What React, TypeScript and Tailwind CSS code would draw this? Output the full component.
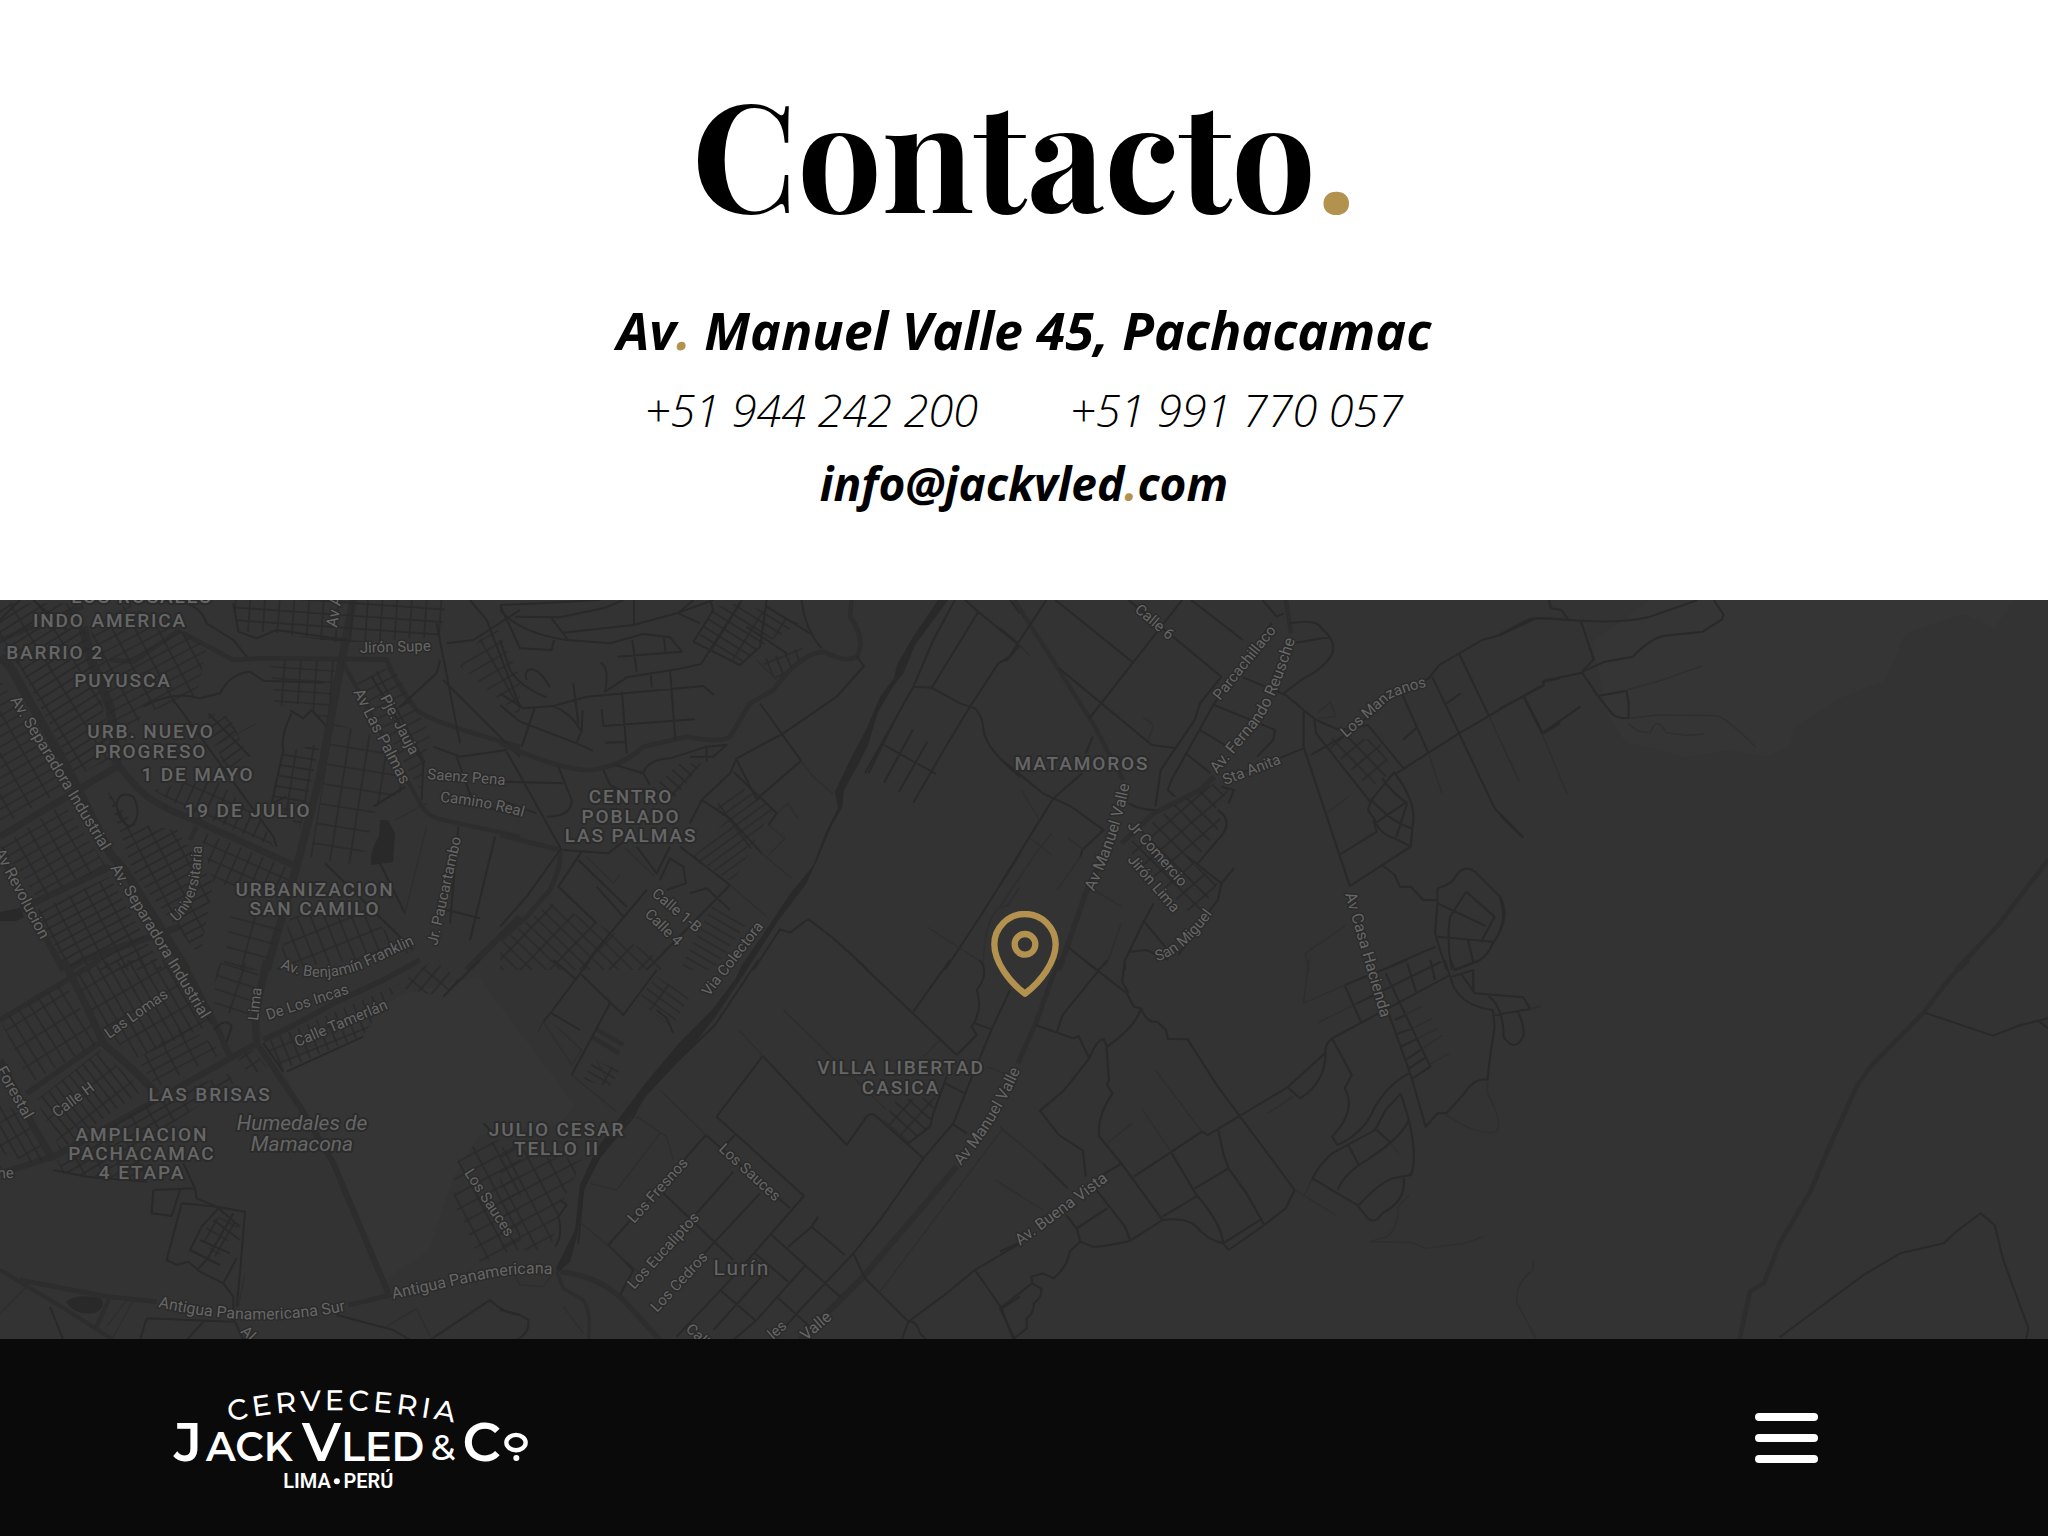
import React, { useId } from "react";

type Tile = {
  transform: string;
  major?: [number, string][];
  minor: string;
  faint?: string;
};

type Grid = { tile: number; points: string; angle: number; w: number; h: number };

const TILES: Tile[] = [
  {
    transform: "translate(0 590) scale(0.33333)",
    major: [
      [26, "M0 200L30 230L200 530L330 790L380 850L560 1140"],
      [24, "M1060 30L1010 290L960 560L890 830L800 1140"],
      [28, "M250 110L270 200L330 350L350 520"],
      [20, "M350 520L400 580Q450 640 560 680L890 830M350 530L200 620L0 740M330 830L100 940L60 960M540 1010L250 1110L200 1140"],
      [14, "M550 130L700 210L780 205L1160 208Q1180 270 1250 360Q1300 400 1560 470M0 150L250 50M540 120L400 215L330 210M590 710L570 750"],
      [12, "M1030 220L1260 640Q1280 680 1330 690L1560 740"],
      [18, "M0 790L190 1140M1560 980L1400 1140"],
    ],
    minor:
      "M520 30Q600 40 620 100L700 150L740 200M430 350Q520 300 600 325L660 310Q690 250 750 245L790 272L970 278M700 40L715 125L770 145L830 120L1040 150M870 360L910 385L935 360L980 410M875 370Q840 440 850 480L815 640L860 620M1115 260L1270 520L1265 630M1320 210L1310 250L1200 350M1310 100L1380 460M1330 270L1560 500M1410 30L1460 90L1560 350M1340 160L1420 150L1560 60M1300 470L1380 500L1520 480M1375 710L1350 1000M1485 740L1410 1050M1215 590L1120 650M975 820L1240 1080M520 330L820 740L830 770M625 370L750 500M60 30L0 90M100 30L200 120M350 640Q360 600 400 620Q430 680 390 710Q350 690 350 640M1140 820L1215 970M1340 960L1440 985M1370 500L1420 640L1560 680",
    faint: "M1280 710L1215 970M640 470L770 400M1185 690L1280 640",
  },
  {
    transform: "translate(500 590) scale(0.33333)",
    major: [
      [14, "M0 460Q230 560 300 535Q380 520 430 470L560 440Q660 460 690 440L750 340L820 300Q900 190 970 185Q1040 220 1070 200Q1100 150 1050 80L1055 30"],
      [14, "M0 735L180 780Q185 830 150 900L80 980L0 1050"],
    ],
    minor:
      "M0 45L120 40L300 30M0 45L60 175L155 180L162 150M0 60Q60 130 200 150L330 160L430 132L510 142L546 185L352 200M155 85L205 150M190 128L400 105L530 70L640 30M402 30L402 105M397 150L410 245M492 145L497 188M45 80L180 82L310 55L370 30M0 150L30 240Q60 290 140 322M80 270Q70 240 95 238Q120 240 150 292M302 218Q330 235 315 305L380 262L540 236L603 222L725 30M0 310L70 355L160 348L260 320L610 288L642 315M452 246L455 292M510 240L526 450M366 305L380 490M305 357L310 408L585 388M315 458L375 456M220 280L235 400M248 360L245 425L228 460M105 352L65 470M0 345L60 395L230 460L278 482M160 348Q215 370 245 425M535 70L580 30M535 70L600 100M580 155L640 60L630 30M580 155L720 225L780 170L800 30M905 30Q915 120 965 175M740 110L860 190M800 50L930 130M1070 200L1092 228L1010 320L850 430L710 505L690 550L605 630L570 700M780 340L903 512L770 628L710 510M700 545L830 670L805 705M605 630L690 685L785 790M20 485L185 780M0 575L190 580M175 530L215 630Q215 680 140 680M0 630L110 670M310 540L330 585L390 615M345 525L430 550L450 585M430 550Q440 510 510 505L620 470L680 464L640 500L570 500M620 470L620 515M540 770L690 885L440 1140M410 770L470 850L510 770M190 780L325 790L370 755M180 780L80 920L0 1010M245 785L175 890L290 1000M235 810L380 950M440 900L280 1090L250 1140M290 890L370 980M480 870L510 805L550 830L558 880L500 900M570 910L620 895L690 960M1365 30L1300 150L1240 290L1095 550M1395 30L1435 65L1295 293L1240 290M1435 65L1550 160M1560 165L1530 200L1495 220L1410 350L1340 465L1240 638M1295 293L1380 340L1425 355Q1450 380 1450 420Q1460 480 1560 560M1190 380L1105 550M1238 420L1152 578M1282 455L1197 605M1152 465L1308 552M1530 30L1560 70M1560 790L1440 980L1335 1140M760 1140L840 1018L870 1028L925 987L1000 1045L1105 1140",
    faint:
      "M903 512L940 560L1000 612M785 790L875 865M830 670L865 640L893 685M805 705L855 745L805 795M690 885L800 980M375 775L465 860M1560 890L1525 945L1495 955Q1450 1000 1450 1140M1285 1013L1450 1120M260 800L340 880L360 855M770 210L830 270",
  },
  {
    transform: "translate(1000 590) scale(0.35714 0.33333)",
    major: [
      [12, "M40 30L260 400L345 570M800 30L815 130"],
      [15, "M600 560L560 600L430 670L340 760M330 700L240 910L165 1140"],
    ],
    minor:
      "M130 30L50 160L20 210L0 215M0 115L50 160M155 30L370 215M510 30L250 385M165 235L425 465L495 475M360 30L620 260M535 30L680 150M735 30L775 80L795 70M620 260L560 340L545 390L450 540L435 650M760 100L600 340L480 570L470 600L490 620M810 100Q890 85 900 115Q950 160 925 200Q900 240 850 265L795 310M830 158L925 140M680 262L800 315L850 360L885 390M850 360L850 470L980 890M600 345L770 420L765 450L720 500M560 420L630 465M520 490L590 550M850 475L700 540L630 560M870 495L960 440L1110 310L1200 265L1230 225L1350 150L1400 135L1500 85L1568 87M1110 550L1285 430L1470 315L1520 285L1520 275L1568 265M885 390L950 420L1030 405L1130 535M880 390L885 430L1040 640M1285 190L1370 380M1210 260L1385 655L1465 742M1125 310L1200 490M1465 315L1520 430L1568 400M1250 340L1290 310M1165 415L1128 450M1105 550Q1170 640 1155 710L1150 770L1105 745Q1060 730 1050 690L1030 660L1040 630L1105 545M1050 700L1140 635M1040 630Q1100 700 1155 715M1110 740L1140 640M1070 565Q1100 610 1140 640M950 795L1055 725L1045 690M980 888L1150 770M1070 825L1105 855L1120 890L1150 890L1185 930L1225 930M1225 895Q1270 880 1275 860Q1300 820 1330 845L1400 920Q1425 1000 1380 1060Q1360 1110 1320 1120L1270 1140M1225 895L1225 940L1360 1008M1305 905L1385 980L1350 1050M1305 905L1260 980Q1250 1060 1265 1140M1225 1040L1380 1055M1225 940L1218 1030L1250 1140M1310 1050L1325 1115M0 505L120 610L200 650L290 720L230 780L225 800M230 550L150 625L80 745L0 885M240 490L260 440M360 640Q390 660 435 660M190 1070L270 1140M430 940L400 1000L350 1110L350 1140M400 990L470 1080M620 880L655 835M620 880L610 930L560 1000L500 1095M525 800L620 880M365 1085L410 1080L470 1110M1090 1130L1220 1070M610 660Q650 690 625 730L550 825M620 590L655 600L640 640",
    faint:
      "M50 160L85 200M85 745L145 795M225 800L160 900M60 600L110 690M145 730L100 790L0 950M265 900L340 950M340 1000L300 1120L270 1140M1370 380L1455 575M1200 490L1238 610M915 670L975 620M970 1005L855 1090L865 1140M890 370L925 335L940 380L890 385M400 380L430 405L415 450M190 745L235 780",
  },
  {
    transform: "translate(1500 590) scale(0.34951 0.33333)",
    major: [[13, "M1568 810L1430 1000L1305 1140"]],
    minor:
      "M0 133L60 100Q90 80 120 85L230 92Q350 100 430 80L565 30M140 30L145 55L175 60L195 88M232 95L268 208L235 245L300 215L380 200Q430 145 470 137L580 125L635 88L640 75L612 30M0 355L125 287L125 272L235 248L280 318L320 370Q330 385 368 385L368 340L362 302L280 318M65 315L120 430L230 350M0 675L65 742M0 920Q25 970 0 1020",
    faint:
      "M362 300L460 272L580 227M368 385L450 375L620 377Q650 385 730 470M368 400Q390 430 430 428Q440 400 450 400Q465 405 475 428L535 436L585 432M0 450L52 570M120 430L192 612",
  },
  {
    transform: "translate(0 960) scale(0.33333)",
    major: [
      [16, "M0 180L300 0M80 400L310 240M790 240Q900 190 1000 130L1150 60L1260 0"],
      [22, "M190 0L260 140L310 250L400 330L470 400M0 300L100 500L160 600M800 0L765 170L770 250"],
      [18, "M540 -10L650 200L690 290M770 250L380 470L160 590L0 640M770 250L900 440L1000 610L1165 1000"],
      [14, "M60 960L320 1010L470 1025M1045 1035L1175 1005"],
      [12, "M0 930L200 1050L340 1140M330 1010L290 1100"],
    ],
    minor:
      "M160 630L260 650L440 665M460 690L455 760L515 768L540 690M460 690L585 685L550 610M585 685L590 715L650 740M545 730L500 900L530 915L565 905L600 935L670 970L700 1010L700 1070M545 730L650 740L735 755L720 940L710 1040M650 740L720 800M655 745L605 800L570 870L660 915M700 760L620 900L590 930M640 780L720 840M600 840L690 880M710 895L670 970M440 1075L700 1085M440 1075L420 1140M700 1075L730 1140M610 1085L560 1140M1010 1065L1180 1110L1230 1140M1290 1140L1470 1020Q1510 1060 1560 1065M150 1040L190 1140M860 335L1090 230M790 250L850 335M640 210Q680 170 695 200L680 245M1450 490L1470 510M1330 110L1440 0",
    faint: "M400 1020L340 1130M380 1020L320 1100M1160 1100L1250 1045L1290 1130M0 1060L80 980M735 940L715 1040",
  },
  {
    transform: "translate(500 960) scale(0.33333)",
    major: [
      [10, "M170 935L190 985L250 1020Q275 1060 265 1140"],
      [16, "M180 935Q300 950 370 1020L480 1140"],
      [18, "M1370 620L1090 950L1000 1040L900 1140"],
      [13, "M290 208L370 255M278 232L358 280"],
    ],
    minor:
      "M618 525L870 745M788 288L650 470L912 708L700 950L530 1130M788 288L1040 555L1100 470Q1115 455 1130 470L1270 595M1070 0L1370 285M1350 0L1240 155M1440 0Q1470 40 1430 90Q1450 150 1415 200L1430 225L1370 285M1340 350L1300 460L1290 500L1225 550M1530 90L1475 208L1420 340L1360 490L1270 595L1140 780L1060 880L900 1050L820 1140M1425 190L1475 208M1335 370L1395 400M1355 490L1400 520M618 525L325 855L400 930M700 635L590 760M490 700L700 900M780 700L640 850L560 940M705 525L680 550M815 825L1020 1010M935 800L865 860M955 770L935 800L1035 885M765 880L865 965M915 918L770 1080L700 1140M660 990L765 1080M835 1015L930 1100M785 950L640 1110M1060 880L1095 955L1225 1085Q1250 1080 1260 1120L1280 1140M1225 1085L1340 1000L1425 930L1560 850M1225 1085L1205 1140M1425 930L1505 1045L1540 1140M1560 1010L1505 1045M270 0L155 155L130 185M240 40L370 165L470 30M330 130L215 345M155 160L240 210M160 0L230 60M775 0L645 195L440 390L400 470L300 590L250 680L235 850M470 150L500 175L520 220M0 1050Q60 1060 85 1080Q90 1120 50 1140M180 720L200 735L175 770Q190 830 165 860M400 930L360 1005",
    faint:
      "M480 390L618 525M715 208L788 288M850 150L1160 450M130 185L215 315L245 270L170 200M215 345L350 455M410 470L500 530L520 600M480 520L350 690L270 670M245 790L420 940M190 1040L250 1120M1560 550L1505 510L1140 995M1485 660L1560 705M1460 320L1510 340M1320 240L1270 290M130 185L115 215M290 300L330 380M40 940L60 975L130 980L160 940",
  },
  {
    transform: "translate(1000 960) scale(0.35714 0.33333)",
    major: [[13, "M165 0L100 190L50 310"]],
    minor:
      "M235 0L355 100L375 140L395 145Q410 190 440 185L465 210L470 237L525 238L610 380L825 690L800 745L740 795L640 870L625 850Q620 790 550 705L480 578M300 0L175 165L160 215M350 0L342 65L360 100M100 195L205 235L220 228L250 295L180 390L112 452L165 525L232 572L240 650M250 295Q270 240 290 237L300 260Q380 200 395 145M298 260L305 360L300 375L315 400Q270 470 278 530L340 610L455 780Q520 770 550 800Q580 840 625 850L735 775M340 610L280 650M50 850L0 875M375 650L565 515L582 525L805 382L910 280Q910 250 930 235L1260 45M610 505L625 580L640 625L690 700L740 795M545 685L640 625M455 770L552 708M270 690L350 800L365 842L455 780M365 842Q290 860 260 860L225 845L215 805L300 745M185 765L215 805M120 610L190 685M225 845L195 875Q190 920 150 955L120 940L88 950L90 970L115 985Q120 1010 95 1030Q95 1060 75 1075L75 1105L40 1135L0 1045L90 970M805 382L840 415Q910 370 912 280M930 235L985 345L965 385Q1000 450 930 530L945 555Q1020 520 1050 440Q1090 370 1145 340M965 75L1010 185M1080 40L1205 320L1155 355M1085 150L1150 345L1192 500L1225 460L1250 460L1300 400Q1330 350 1365 360Q1370 300 1385 200L1380 150Q1300 140 1270 80L1245 0M965 75L1140 0M1140 10L1165 95M1205 0L1218 60M1000 130L1235 5M1105 180L1135 165M1112 222L1155 205M1122 260L1170 235M1135 300L1185 265M1145 325L1195 290M1290 40L1330 100L1465 112L1485 147L1385 165M1265 50L1325 30L1325 90M1260 0L1275 30L1345 0M1365 105Q1410 140 1410 230Q1440 280 1465 230Q1470 200 1450 155M1122 400L1145 480Q1170 600 1150 645L1100 655Q1060 670 1005 735M1122 400L1080 450L1050 510L930 580Q890 620 875 655L1000 735L1030 775Q1050 795 1070 760Q1140 720 1130 655M975 555L1005 615M1145 480Q1120 540 1005 615Q960 650 945 690M1055 510L1095 550",
    faint:
      "M0 500L120 610M0 670L120 750M435 330L565 515M400 450L480 578M300 550L370 490M750 460L820 410M890 188L1000 130M865 0L850 130L965 75M1095 550L1115 580M825 690L940 765M850 710L875 655M1035 845L1155 848L1190 865L1300 850L1355 830M1250 465Q1340 530 1390 515Q1410 490 1365 400L1365 360M1145 705L1115 740Q1115 800 1085 830L1035 845M1135 165L1180 140M1155 205L1210 175M1170 235L1225 205M1185 265L1240 225M1200 315L1258 280M1493 900L1493 930Q1440 970 1448 1030L1500 1135M1485 147L1515 138",
  },
  {
    transform: "translate(1500 960) scale(0.34951 0.33333)",
    major: [[13, "M1340 0L1290 50L1210 160L1060 320L1020 380L930 590L890 690L800 850L755 970L715 995L685 1140"]],
    minor:
      "M1215 158L1410 227L1490 195L1568 175M1540 182L1568 205M800 1132L1040 945L1145 880L1270 850L1305 815L1375 760L1415 795L1440 900L1512 1105L1505 1140",
  },
];

const GRIDS: Grid[] = [
  { tile: 0, points: "0,40 230,40 280,210 340,500 230,560 60,230 0,170", angle: -32, w: 72, h: 26 },
  { tile: 0, points: "0,260 190,600 0,710", angle: -30, w: 62, h: 27 },
  { tile: 0, points: "270,110 380,40 560,130 620,170 590,320 430,370 350,500", angle: -28, w: 60, h: 28 },
  { tile: 0, points: "0,770 190,640 320,830 110,925 60,850", angle: -30, w: 48, h: 28 },
  { tile: 0, points: "320,600 400,700 530,720 640,880 600,1100 400,850", angle: -28, w: 56, h: 26 },
  { tile: 0, points: "110,960 330,860 490,1140 200,1140", angle: -28, w: 50, h: 26 },
  { tile: 0, points: "600,720 880,840 850,910 640,880", angle: 24, w: 36, h: 40 },
  { tile: 0, points: "690,960 850,1000 800,1140 670,1140", angle: 15, w: 90, h: 45 },
  { tile: 0, points: "870,980 1090,960 1230,1090 830,1140", angle: -22, w: 38, h: 62 },
  { tile: 0, points: "460,600 640,560 790,700 820,770 540,650", angle: 24, w: 32, h: 60 },
  { tile: 0, points: "700,30 1340,30 1320,140 1030,160 800,125 715,125", angle: 4, w: 44, h: 38 },
  { tile: 0, points: "810,210 1010,210 980,410 910,340 825,350", angle: 4, w: 48, h: 34 },
  { tile: 0, points: "1000,400 1130,440 1230,590 1130,650 1080,830 930,800", angle: 9, w: 58, h: 60 },
  { tile: 0, points: "850,490 960,460 900,720 820,620", angle: 9, w: 50, h: 32 },
  { tile: 0, points: "1060,260 1180,230 1290,430 1260,600", angle: -28, w: 80, h: 30 },
  { tile: 0, points: "1380,230 1480,90 1560,260 1560,380", angle: -30, w: 90, h: 34 },
  { tile: 0, points: "620,370 690,380 740,490 680,560", angle: -36, w: 80, h: 26 },
  { tile: 1, points: "640,50 720,40 900,100 780,170 720,220 590,155", angle: 32, w: 70, h: 26 },
  { tile: 1, points: "780,210 910,170 900,215 830,270", angle: -22, w: 30, h: 50 },
  { tile: 1, points: "715,585 820,650 700,880 580,800 680,690 640,650", angle: -36, w: 150, h: 24 },
  { tile: 1, points: "450,600 540,520 610,520 510,640", angle: 42, w: 66, h: 26 },
  { tile: 1, points: "0,1060 150,940 290,1000 500,1120 480,1140 0,1140", angle: 44, w: 64, h: 30 },
  { tile: 1, points: "640,940 740,1000 640,1140 540,1140", angle: 30, w: 200, h: 24 },
  { tile: 2, points: "480,650 600,580 640,600 600,660 625,700 540,820 610,880 550,990 350,770", angle: 47, w: 46, h: 40 },
  { tile: 2, points: "900,450 960,440 1060,450 1100,545 1035,595", angle: 48, w: 44, h: 36 },
  { tile: 4, points: "0,180 190,70 310,240 90,370", angle: -32, w: 34, h: 62 },
  { tile: 4, points: "220,50 330,0 520,0 640,190 400,300 290,180", angle: -30, w: 30, h: 66 },
  { tile: 4, points: "410,300 560,190 670,280 470,380", angle: -28, w: 62, h: 28 },
  { tile: 4, points: "110,420 300,270 430,390 180,570", angle: -38, w: 26, h: 66 },
  { tile: 4, points: "170,600 440,430 690,340 700,370 440,540 440,660 190,640", angle: -30, w: 52, h: 26 },
  { tile: 4, points: "0,420 70,470 150,600 100,610 0,580", angle: -30, w: 28, h: 60 },
  { tile: 4, points: "790,250 1200,70 1090,225 850,330", angle: -22, w: 30, h: 46 },
  { tile: 4, points: "650,10 780,10 745,180 640,140", angle: 18, w: 70, h: 40 },
  { tile: 4, points: "710,290 760,270 800,320 750,350", angle: -34, w: 30, h: 34 },
  { tile: 4, points: "1180,80 1300,0 1380,60 1330,110", angle: 40, w: 34, h: 50 },
  { tile: 4, points: "1395,565 1500,540 1562,560 1562,860 1440,910 1380,760 1360,740 1365,620", angle: -28, w: 58, h: 42 },
  { tile: 4, points: "600,820 655,770 720,790 650,900", angle: 30, w: 50, h: 48 },
  { tile: 5, points: "0,560 250,600 190,720 150,870 50,870 0,860", angle: -28, w: 52, h: 40 },
  { tile: 5, points: "470,50 570,110 515,200 410,120", angle: 36, w: 90, h: 24 },
  { tile: 5, points: "1190,420 1310,410 1285,500 1225,550 1150,480", angle: 42, w: 46, h: 32 },
  { tile: 5, points: "280,300 360,330 330,380 250,360", angle: 30, w: 90, h: 22 },
];

const DISTRICTS: [number, number, string][] = [
  [142, 603, "LOS ROSALES"],
  [110, 627, "INDO AMERICA"],
  [55, 659, "BARRIO 2"],
  [123, 687, "PUYUSCA"],
  [151, 738, "URB. NUEVO"],
  [151, 758, "PROGRESO"],
  [198, 781, "1 DE MAYO"],
  [248, 817, "19 DE JULIO"],
  [315, 896, "URBANIZACION"],
  [315, 915, "SAN CAMILO"],
  [631, 803, "CENTRO"],
  [631, 823, "POBLADO"],
  [631, 842, "LAS PALMAS"],
  [1082, 770, "MATAMOROS"],
  [210, 1101, "LAS BRISAS"],
  [142, 1141, "AMPLIACION"],
  [142, 1160, "PACHACAMAC"],
  [142, 1179, "4 ETAPA"],
  [557, 1136, "JULIO CESAR"],
  [557, 1155, "TELLO II"],
  [901, 1074, "VILLA LIBERTAD"],
  [901, 1094, "CASICA"],
];

const AVENUES: [string, string][] = [
  ["Av. Separadora Industrial", "M10 700L108 861"],
  ["Av. Separadora Industrial", "M110 868L208 1030"],
  ["Av Revolucion", "M-6 852L46 950"],
  ["Av A", "M337 628L344 580"],
  ["Av Las Palmas", "M353 692L405 792"],
  ["Antigua Panamericana Sur", "M158 1307Q262 1332 362 1307"],
  ["Antigua Panamericana", "M393 1299L470 1282Q525 1269 565 1276"],
  ["Av. Fernando Reusche", "M1217 774L1257 726Q1278 700 1301 620"],
  ["Av Manuel Valle", "M1094 892Q1128 815 1132 765"],
  ["Av Manuel Valle", "M961 1166Q1001 1120 1028 1052"],
  ["Forestal", "M-4 1070L36 1140"],
  ["Av. Buena Vista", "M1020 1246L1113 1177"],
  ["Av Casa Hacienda", "M1345 894L1382 1022"],
  ["Valle", "M806 1341L846 1307"],
];

const STREETS: [string, string][] = [
  ["Universitaria", "M176 922Q204 902 202 830"],
  ["ova", "M442 577L468 625"],
  ["Jirón Supe", "M360 653L450 650"],
  ["Pje. Jauja", "M380 698L418 770"],
  ["Saenz Pena", "M427 779L530 787"],
  ["Camino Real", "M440 802Q490 806 540 822"],
  ["Jr. Paucartambo", "M437 946L464 825"],
  ["Av. Benjamín Franklin", "M280 968Q322 987 368 966L430 937"],
  ["De Los Incas", "M268 1020L366 988"],
  ["Calle Tamerlán", "M297 1047L404 1002"],
  ["Lima", "M258 1021L263 975"],
  ["Las Lomas", "M109 1039L184 986"],
  ["Calle H", "M57 1118L110 1079"],
  ["che", "M-10 1179L30 1177"],
  ["Al", "M240 1332L266 1358"],
  ["Los Sauces", "M464 1173L516 1252"],
  ["Los Sauces", "M718 1150L785 1211"],
  ["Los Fresnos", "M634 1224L700 1151"],
  ["Los Eucaliptos", "M634 1290L711 1206"],
  ["Los Cedros", "M657 1313L722 1243"],
  ["Calle", "M685 1330L725 1367"],
  ["les", "M773 1340L805 1312"],
  ["Via Colectora", "M709 997L772 916"],
  ["Calle 1-B", "M651 895L708 943"],
  ["Calle 4", "M644 915L690 960"],
  ["Calle 6", "M1134 611L1180 650"],
  ["Parcachillaco", "M1220 701L1286 619"],
  ["Sta Anita", "M1225 785L1295 758"],
  ["Los Manzanos", "M1346 738L1390 699Q1402 692 1435 685"],
  ["Jr Comercio", "M1127 826L1188 896"],
  ["Jirón Lima", "M1127 860L1182 924"],
  ["San Miguel", "M1157 961Q1185 955 1221 902"],
];

const HALO = "fill-[#666666] stroke-[#2b2b2b] [paint-order:stroke] [stroke-linejoin:round]";

function PathLabel({ text, d, className }: { text: string; d: string; className: string }) {
  const id = useId();
  return (
    <>
      <path id={id} d={d} fill="none" />
      <text className={className} strokeWidth={3}>
        <textPath href={`#${id}`}>{text}</textPath>
      </text>
    </>
  );
}

function Blocks({ points, angle, w, h }: Omit<Grid, "tile">) {
  const id = useId();
  return (
    <>
      <defs>
        <pattern id={id} width={w * 2} height={h * 2} patternUnits="userSpaceOnUse" patternTransform={`rotate(${angle})`}>
          <path
            d={`M0 3H${w * 2}M0 ${h + 3}H${w * 2}M3 0V${h * 2}M${w + 3} 0V${h * 2}`}
            stroke="#292929"
            strokeWidth={5}
            fill="none"
          />
        </pattern>
      </defs>
      <polygon points={points} fill={`url(#${id})`} />
    </>
  );
}

function StreetMap() {
  return (
    <svg viewBox="0 600 2048 739" className="block h-auto w-full bg-[#333333]" role="img" aria-label="Mapa de Pachacamac">
      <path
        d="M1650 600H2014L1995 628L1963 614L1906 633L1885 681L1843 697L1794 727L1790 747L1767 757L1731 750L1685 758L1660 750L1626 743L1608 717L1597 666L1592 642Z"
        fill="#353535"
      />
      <path d="M403 994L478 976L575 1105L560 1125L480 1135L452 1180L430 1250L385 1280L280 1065Z" fill="#353535" />
      {TILES.map((tile, i) => (
        <g key={tile.transform} transform={tile.transform} fill="none" strokeLinejoin="round">
          {tile.major?.map(([width, d]) => (
            <path key={d} d={d} stroke="#2d2d2d" strokeWidth={width} />
          ))}
          {GRIDS.filter((g) => g.tile === i).map((g) => (
            <Blocks key={g.points} points={g.points} angle={g.angle} w={g.w} h={g.h} />
          ))}
          <path d={tile.minor} stroke="#292929" strokeWidth={6} />
          {tile.faint && <path d={tile.faint} stroke="#2e2e2e" strokeWidth={4} />}
        </g>
      ))}
      <path
        d="M938 600L913 637L897 665L894 678L880 697L866 730L850 760L835 792L838 808L826 832L813 866L790 894L762 936L742 965L736 978L712 1010L680 1042L644 1085L618 1120L596 1150L580 1185L575 1230L556 1268L558 1272L570 1262L577 1236L584 1190L600 1156L628 1121L648 1094L690 1049L716 1016L750 965L778 921L806 884L818 858L832 825L842 808L844 790L858 765L868 745L878 712L892 688L904 672L915 645L948 600Z"
        fill="#292929"
      />
      <path d="M380 820H388L395 833L393 862L371 865Q370 848 379 837Z" fill="#292929" />
      <path d="M0 912L20 908L24 917L16 921H0Z" fill="#292929" />
      <path d="M66 1302Q75 1293 100 1298Q108 1306 95 1313Q75 1316 66 1302Z" fill="#292929" />
      {DISTRICTS.map(([x, y, name]) => (
        <text
          key={name}
          x={x}
          y={y}
          textAnchor="middle"
          strokeWidth={4}
          className={`${HALO} font-['Roboto'] text-[19px] font-medium tracking-widest`}
        >
          {name}
        </text>
      ))}
      <g className={`${HALO} font-['Roboto'] text-[21px] italic`} strokeWidth={4} textAnchor="middle">
        <text x={302} y={1130}>Humedales de</text>
        <text x={302} y={1151}>Mamacona</text>
      </g>
      <text x={742} y={1275} textAnchor="middle" strokeWidth={4} className={`${HALO} font-['Roboto'] text-[21px] tracking-widest`}>
        Lurín
      </text>
      {AVENUES.map(([text, d]) => (
        <PathLabel key={d} text={text} d={d} className={`${HALO} font-['Roboto'] text-[16px]`} />
      ))}
      {STREETS.map(([text, d]) => (
        <PathLabel key={d} text={text} d={d} className={`${HALO} font-['Roboto'] text-[15px]`} />
      ))}
    </svg>
  );
}

function Pin() {
  return (
    <svg viewBox="0 0 204 260" className="w-17" fill="none" stroke="#b3924f" strokeWidth={19} aria-hidden="true">
      <path d="M102 248C54 212 10 152 10 100A92 91 0 0 1 194 100C194 152 150 212 102 248Z" strokeLinejoin="round" />
      <circle cx={102} cy={100} r={31} />
    </svg>
  );
}

function Logo() {
  return (
    <svg viewBox="60 40 1090 330" className="h-auto w-[363px]" fill="#ffffff" role="img" aria-label="Cervecería Jack Vled & Co">
      <path id="logo-arc" d="M238 156Q572 80 980 174" fill="none" />
      <text className="font-['Montserrat','Lato',sans-serif] text-[86px] font-medium tracking-[0.14em]">
        <textPath href="#logo-arc">CERVECERIA</textPath>
      </text>
      <g className="font-['Montserrat','Lato',sans-serif] font-semibold">
        <g className="text-[160px]">
          <text x={72} y={275}>J</text>
          <text x={456} y={275}>V</text>
          <text x={938} y={275}>C</text>
        </g>
        <g className="text-[119px]">
          <text x={168} y={273}>ACK</text>
          <text x={574} y={273}>LED</text>
        </g>
        <text x={843} y={272} className="text-[108px] font-medium">&amp;</text>
      </g>
      <ellipse cx={1099} cy={219} rx={29} ry={23} fill="none" stroke="#ffffff" strokeWidth={13} />
      <circle cx={1100} cy={265} r={9} />
      <g className="font-['Roboto'] text-[60px] font-semibold">
        <text x={543} y={356} textAnchor="end">LIMA</text>
        <text x={581} y={356}>PERÚ</text>
      </g>
      <circle cx={561} cy={335} r={9} />
    </svg>
  );
}

const GOLD = "text-[#b3924f]";

export default function App() {
  return (
    <div className="flex min-h-screen flex-col bg-white text-black">
      <main>
        <section className="flex flex-col items-center pt-[55px] pb-[84px] text-center font-['Open_Sans',sans-serif] italic">
          <h1 className="font-['Playfair_Display','Liberation_Serif',serif] text-[150px] leading-[192px] font-bold not-italic">
            Contacto<span className={GOLD}>.</span>
          </h1>
          <address className="mt-[43px] flex flex-col items-center">
            <p className="text-[52px] leading-[80px] font-bold">
              Av<span className={GOLD}>.</span> Manuel Valle 45, Pachacamac
            </p>
            <p className="flex flex-wrap justify-center gap-x-[92px] text-[45px] leading-[80px] font-light">
              <a href="tel:+51944242200">+51 944 242 200</a>
              <a href="tel:+51991770057">+51 991 770 057</a>
            </p>
            <a href="mailto:info@jackvled.com" className="text-[46px] leading-[66px] font-bold">
              info@jackvled<span className={GOLD}>.</span>com
            </a>
          </address>
        </section>
        <section className="relative" aria-label="Ubicación">
          <StreetMap />
          <div className="pointer-events-none absolute inset-0 flex items-center justify-center pb-[30px] pl-[2px]">
            <Pin />
          </div>
        </section>
      </main>
      <footer className="flex grow items-center justify-between bg-[#0a0a0a] py-[42px] pr-[230px] pl-[170px]">
        <Logo />
        <button type="button" aria-label="Abrir menú" className="flex w-[63px] flex-col gap-[13px]">
          <span className="h-2 w-full rounded-full bg-white" />
          <span className="h-2 w-full rounded-full bg-white" />
          <span className="h-2 w-full rounded-full bg-white" />
        </button>
      </footer>
    </div>
  );
}
